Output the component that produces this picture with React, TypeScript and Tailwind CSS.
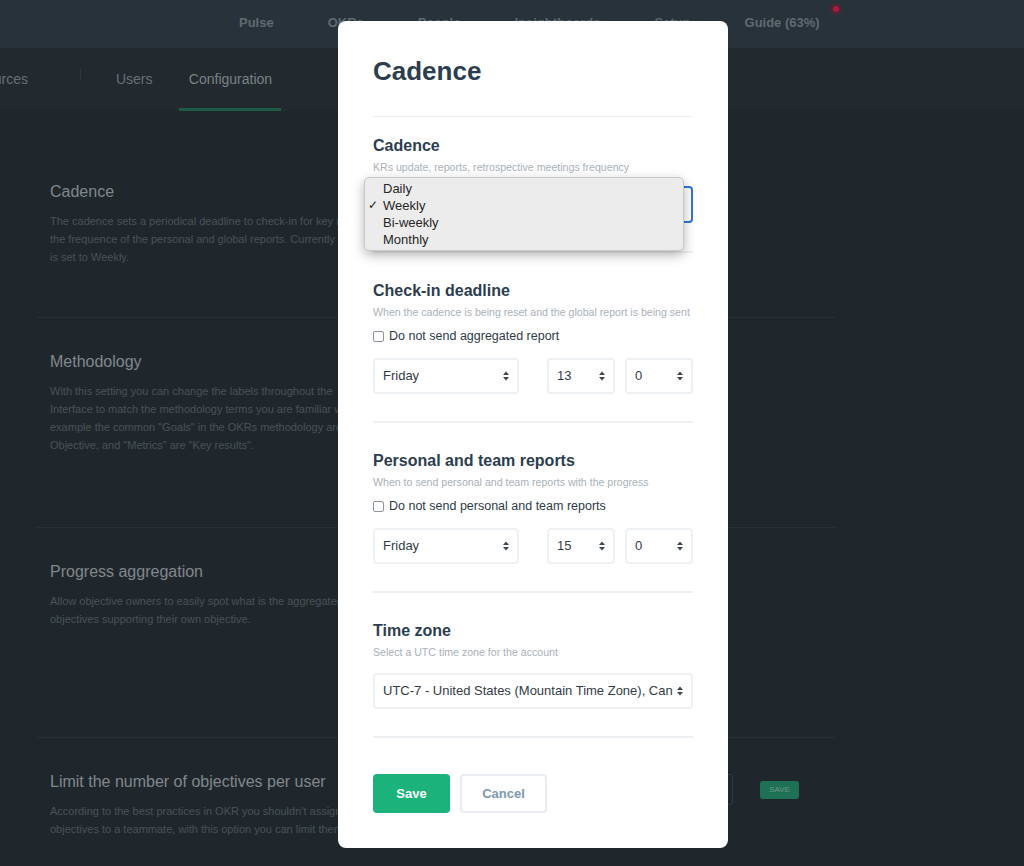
import React from 'react'

const sections = [
  {
    title: 'Cadence',
    lines: [
      'The cadence sets a periodical deadline to check-in for key results and',
      'the frequence of the personal and global reports. Currently the cadence',
      'is set to Weekly.',
    ],
  },
  {
    title: 'Methodology',
    lines: [
      'With this setting you can change the labels throughout the',
      'Interface to match the methodology terms you are familiar with. For',
      'example the common "Goals" in the OKRs methodology are called',
      'Objective, and "Metrics" are "Key results".',
    ],
  },
  {
    title: 'Progress aggregation',
    lines: [
      'Allow objective owners to easily spot what is the aggregated progress of the',
      'objectives supporting their own objective.',
    ],
  },
  {
    title: 'Limit the number of objectives per user',
    lines: [
      "According to the best practices in OKR you shouldn't assign too many",
      'objectives to a teammate, with this option you can limit them.',
    ],
  },
]

function Arrows() {
  return (
    <svg width="6" height="10" viewBox="0 0 6 10" className="shrink-0">
      <polygon points="0,4 3,0.5 6,4" fill="#3f4852" />
      <polygon points="0,6 3,9.5 6,6" fill="#3f4852" />
    </svg>
  )
}

function Select({ value, className = '' }: { value: string; className?: string }) {
  return (
    <div
      className={`h-[36px] flex items-center gap-1 pl-[8px] pr-[8px] border-2 border-[#edf1f4] rounded-[4px] text-[13px] text-[#333c45] ${className}`}
    >
      <span className="flex-1 overflow-hidden whitespace-nowrap">{value}</span>
      <Arrows />
    </div>
  )
}

function Checkbox({ label }: { label: string }) {
  return (
    <label className="mt-[9px] flex items-center gap-[5px] h-[16px] text-[12.5px] text-[#2e3b48]">
      <span className="w-[11px] h-[11px] rounded-[2px] border border-[#8e959c] bg-white" />
      {label}
    </label>
  )
}

function Heading({ title, desc }: { title: string; desc: string }) {
  return (
    <>
      <h3 className="text-[16px] leading-[20px] font-bold text-[#2c3d4f]">{title}</h3>
      <p className="mt-[4px] text-[10.6px] leading-[14px] whitespace-nowrap text-[#a9b1b9]">{desc}</p>
    </>
  )
}

function TimeRow({ day, hour, minute }: { day: string; hour: string; minute: string }) {
  return (
    <div className="mt-[14px] flex">
      <Select value={day} className="w-[146px]" />
      <Select value={hour} className="w-[68px] ml-[28px]" />
      <Select value={minute} className="w-[68px] ml-[10px]" />
    </div>
  )
}

export default function App() {
  return (
    <div className="relative w-[1024px] h-[866px] overflow-hidden bg-[#20272c] font-['Liberation_Sans',Arial,sans-serif]">
      {/* top nav */}
      <div className="h-[48px] bg-[#27323a] flex items-start pt-[13px] pl-[239px] gap-[54px] text-[13px] font-bold text-[#5f6a72]">
        <span>Pulse</span>
        <span>OKRs</span>
        <span>People</span>
        <span>Insightboards</span>
        <span>Setup</span>
        <span className="relative">
          Guide (63%)
          <span className="absolute -right-[22px] -top-[10px] w-[12px] h-[12px] rounded-full bg-[#7a1a35]/40 flex items-center justify-center">
            <span className="w-[6px] h-[6px] rounded-full bg-[#b0173f]" />
          </span>
        </span>
      </div>

      {/* sub nav */}
      <div className="h-[63px] bg-[#22292f] flex items-start text-[14px] text-[#687076]">
        <span className="-ml-[39px] mt-[21px]">Resources</span>
        <span className="ml-[52px] mt-[21px] w-px h-[10px] bg-[#2f383e]" />
        <span className="ml-[35px] mt-[21px]">Users</span>
        <div className="ml-[27px] w-[102px] h-[63px] flex flex-col items-center">
          <span className="mt-[21px] text-[#7b8389]">Configuration</span>
          <span className="mt-auto w-full h-[3px] bg-[#1d5b45]" />
        </div>
      </div>

      {/* settings list */}
      <div className="ml-[37px] w-[798px]">
        {sections.map((s, i) => (
          <div
            key={s.title}
            className={`relative pl-[13px] ${i === 0 ? 'h-[206px] pt-[71px]' : 'h-[210px] pt-[34px] border-t border-[#263037]'}`}
          >
            <h2 className="text-[16px] leading-[20px] text-[#80878c]">{s.title}</h2>
            <div className="mt-[10px] text-[11px] leading-[18px] text-[#4a5257]">
              {s.lines.map(l => (
                <div key={l} className="whitespace-nowrap">{l}</div>
              ))}
            </div>
            {i === 3 && (
              <div className="absolute left-[560px] top-[36px] flex items-center">
                <div className="w-[136px] h-[31px] border border-[#2d3b4b] rounded-[3px] bg-[#20272c]" />
                <button className="ml-[27px] w-[39px] h-[18px] rounded-[3px] bg-[#1e7154] text-[8px] text-[#6f9586]">SAVE</button>
              </div>
            )}
          </div>
        ))}
      </div>

      {/* modal */}
      <div className="absolute left-[338px] top-[21px] w-[390px] h-[827px] bg-white rounded-[8px] px-[35px] pt-[35px]">
        <h1 className="text-[26px] leading-[30px] font-bold text-[#2c3d4f]">Cadence</h1>
        <div className="mt-[30px] border-b border-[#edf0f3]" />

        <div className="relative pt-[19px] pb-[28px] border-b-2 border-[#edf0f3]">
          <Heading title="Cadence" desc="KRs update, reports, retrospective meetings frequency" />
          <Select value="Weekly" className="mt-[12px] h-[37px] !border-[#2f74e6] !border-[2.5px]" />
          <div className="absolute left-[-9px] top-[60px] w-[320px] h-[74px] pt-[2px] rounded-[5px] bg-[#ececec] border border-[#c9c9c9] shadow-[0_4px_12px_rgba(0,0,0,0.3)] text-[13px] leading-[17px] text-[#262626]">
            {['Daily', 'Weekly', 'Bi-weekly', 'Monthly'].map(o => (
              <div key={o} className="flex items-center">
                <span className="w-[18px] pl-[3px] text-[12px]">{o === 'Weekly' ? '✓' : ''}</span>
                <span>{o}</span>
              </div>
            ))}
          </div>
        </div>

        <div className="pt-[28px] pb-[27px] border-b-2 border-[#edf0f3]">
          <Heading title="Check-in deadline" desc="When the cadence is being reset and the global report is being sent" />
          <Checkbox label="Do not send aggregated report" />
          <TimeRow day="Friday" hour="13" minute="0" />
        </div>

        <div className="pt-[28px] pb-[27px] border-b-2 border-[#edf0f3]">
          <Heading title="Personal and team reports" desc="When to send personal and team reports with the progress" />
          <Checkbox label="Do not send personal and team reports" />
          <TimeRow day="Friday" hour="15" minute="0" />
        </div>

        <div className="pt-[28px] pb-[27px] border-b-2 border-[#edf0f3]">
          <Heading title="Time zone" desc="Select a UTC time zone for the account" />
          <Select value="UTC-7 - United States (Mountain Time Zone), Canada" className="mt-[14px] text-[12.6px]" />
        </div>

        <div className="pt-[36px] flex gap-[10px]">
          <button className="w-[77px] h-[39px] rounded-[4px] bg-[#1cb27c] text-white text-[13px] font-bold">Save</button>
          <button className="w-[87px] h-[39px] rounded-[4px] border-2 border-[#e9edf1] text-[#7d97b0] text-[13px] font-bold">Cancel</button>
        </div>
      </div>
    </div>
  )
}
